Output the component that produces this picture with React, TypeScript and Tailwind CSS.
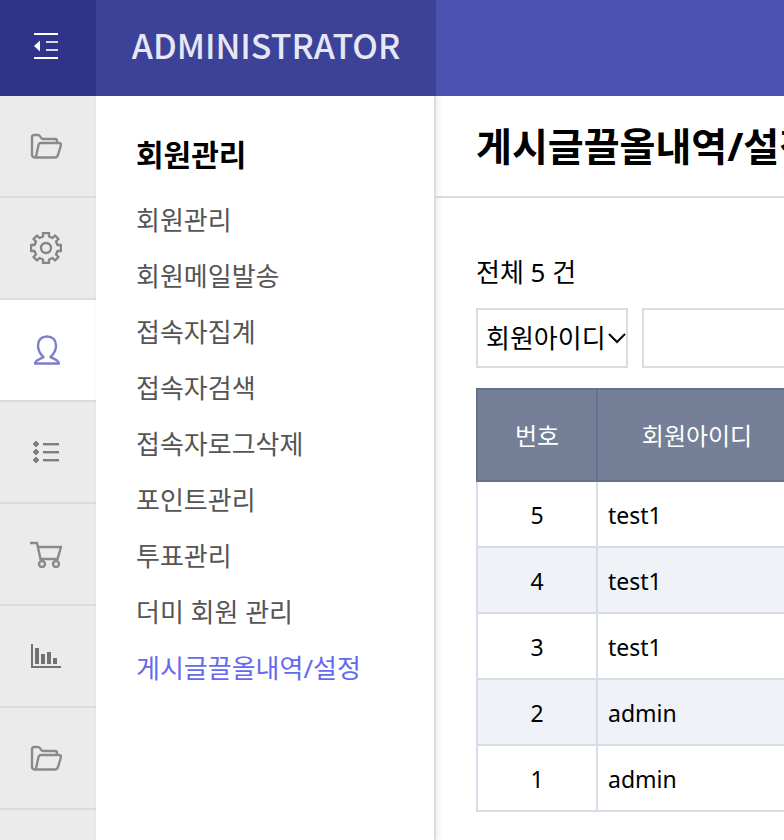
import type { ReactNode } from "react";

const LATIN_KR = "font-['Noto_Sans','Noto_Sans_CJK_KR',sans-serif]";

function FolderIcon() {
  return (
    <svg width="32" height="28" viewBox="0 0 32 28" fill="none" stroke="#8a8a8a" strokeWidth="2.4" strokeLinejoin="round">
      <path d="M4 25 Q2 25 2 23 V5 Q2 3 4 3 H8 Q9.500 3 10.500 5 Q11.500 7 13 7 H25 Q27 7 27 9 V11" />
      <path d="M3.500 25.500 H25 Q27 25.500 28 23 L31 13 Q31 11 29 11 H11 Q9 11 8.500 13 L6 24.500" />
    </svg>
  );
}

function GearIcon() {
  return (
    <svg width="32" height="32" viewBox="0 0 32 32" fill="none" stroke="#858585" strokeWidth="2.4" strokeLinejoin="round">
      <path d="M13 1 H19 V4.500 L22.500 6 L25 3.500 L28.500 7 L26 9.500 L27.500 13 H31 V19 H27.500 L26 22.500 L28.500 25 L25 28.500 L22.500 26 L19 27.500 V31 H13 V27.500 L9.500 26 L7 28.500 L3.500 25 L6 22.500 L4.500 19 H1 V13 H4.500 L6 9.500 L3.500 7 L7 3.500 L9.500 6 L13 4.500 Z" />
      <circle cx="16" cy="16" r="5" />
    </svg>
  );
}

function PersonIcon() {
  return (
    <svg width="28" height="30" viewBox="0 0 28 30" fill="none" stroke="#7c7fce" strokeWidth="2.4" strokeLinejoin="round">
      <path d="M11.500 22 C8 19 6 15 6 10.500 C6 5 9.500 1.500 15 1.500 C20.500 1.500 24 5 24 10.500 C24 15 22 19 18.500 22 C21 24 26 24 27 28.500 H3 C4 24 9 24 11.500 22 Z" />
    </svg>
  );
}

function ListIcon() {
  return (
    <svg width="28" height="24" viewBox="0 0 28 24" fill="#808080">
      {[4, 12, 20].map((y) => (
        <g key={y}>
          <path d={`M4 ${y - 3} L7 ${y} L4 ${y + 3} L1 ${y} Z`} stroke="#808080" strokeLinejoin="round" />
          <rect x="11" y={y - 1} width="16" height="2.400" />
        </g>
      ))}
    </svg>
  );
}

function CartIcon() {
  return (
    <svg width="32" height="28" viewBox="0 0 32 28" fill="none" stroke="#8a8a8a" strokeWidth="2.4">
      <path d="M0 3 H7 L10.500 19 H27.500 L31 7 H8" />
      <circle cx="12" cy="24" r="3" />
      <circle cx="26" cy="24" r="3" />
    </svg>
  );
}

function ChartIcon() {
  return (
    <svg width="30" height="24" viewBox="0 0 30 24" fill="#727272">
      <path d="M0 0 H2 V22 H30 V24 H0 Z" />
      <rect x="4" y="4" width="4" height="16" />
      <rect x="10" y="10" width="4" height="10" />
      <rect x="16" y="8" width="4" height="12" />
      <rect x="22" y="14" width="4" height="6" />
    </svg>
  );
}

const sections: { label: string; icon: ReactNode; active?: boolean }[] = [
  { label: "환경설정", icon: <FolderIcon /> },
  { label: "설정", icon: <GearIcon /> },
  { label: "회원관리", icon: <PersonIcon />, active: true },
  { label: "게시판관리", icon: <ListIcon /> },
  { label: "쇼핑몰관리", icon: <CartIcon /> },
  { label: "통계", icon: <ChartIcon /> },
  { label: "기타", icon: <FolderIcon /> },
];

const menu = [
  "회원관리",
  "회원메일발송",
  "접속자집계",
  "접속자검색",
  "접속자로그삭제",
  "포인트관리",
  "투표관리",
  "더미 회원 관리",
  "게시글끌올내역/설정",
];

const rows = [
  { no: 5, id: "test1" },
  { no: 4, id: "test1" },
  { no: 3, id: "test1" },
  { no: 2, id: "admin" },
  { no: 1, id: "admin" },
];

export default function App() {
  return (
    <div className={`flex h-screen flex-col overflow-hidden bg-white text-black ${LATIN_KR}`}>
      <header className="relative z-20 flex h-24 shrink-0 bg-[#4c52b0]">
        <button type="button" aria-label="메뉴" className="flex w-24 items-center justify-center bg-[#2f3389] pr-1 pb-1">
          <svg width="24" height="26" viewBox="0 0 24 26" fill="#ffffff">
            <rect width="24" height="2" />
            <rect y="24" width="24" height="2" />
            <path d="M0 13 L6 7.500 V18.500 Z" />
            <rect x="12" y="8" width="12" height="2" opacity="0.8" />
            <rect x="12" y="16" width="12" height="2" opacity="0.8" />
          </svg>
        </button>
        <a
          href="#"
          className="flex w-[340px] items-center justify-center bg-[#3d4299] pb-2 font-['Noto_Sans_CJK_KR',sans-serif] text-[34px] font-medium text-[#e6e6f4]"
        >
          ADMINISTRATOR
        </a>
      </header>

      <div className="flex min-h-0 flex-1">
        <nav className="w-24 shrink-0 overflow-hidden bg-[#ebebeb]">
          <ul>
            {sections.map((s, i) => (
              <li key={i}>
                <a
                  href="#"
                  aria-label={s.label}
                  className={`flex h-[102px] items-center justify-center border-b-2 border-[#dcdcdc] pr-1 ${s.active ? "bg-white" : ""}`}
                >
                  {s.icon}
                </a>
              </li>
            ))}
          </ul>
        </nav>

        <aside className="z-10 w-[340px] shrink-0 border-r-2 border-[#dcdcdc] bg-white px-10 pt-10 shadow-[2px_0_6px_rgba(0,0,0,0.08)]">
          <h2 className="text-[30px] leading-[38px] font-bold">회원관리</h2>
          <ul className="mt-[18px]">
            {menu.map((m, i) => (
              <li key={m}>
                <a
                  href="#"
                  className={`block text-[26px] leading-[56px] whitespace-nowrap ${i === menu.length - 1 ? "text-[#6469ef]" : "text-[#555555]"}`}
                >
                  {m}
                </a>
              </li>
            ))}
          </ul>
        </aside>

        <main className="min-w-0 flex-1 overflow-hidden">
          <h1 className="h-[102px] border-b-2 border-[#dcdcdc] pl-10 text-[39px] leading-[100px] font-bold whitespace-nowrap">
            게시글끌올내역/설정
          </h1>
          <div className="w-[900px] px-10 pt-14">
            <p className="text-[26px] leading-9">전체 5 건</p>
            <form className="mt-[18px] flex gap-[14px]">
              <div className="relative">
                <select
                  aria-label="검색대상"
                  className="h-[60px] w-[152px] appearance-none border-2 border-[#dcdcdc] bg-white pl-2 text-[26px]"
                >
                  <option>회원아이디</option>
                </select>
                <svg
                  className="pointer-events-none absolute top-6 right-0 h-3 w-5"
                  viewBox="0 0 20 12"
                  fill="none"
                  stroke="#000000"
                  strokeWidth="2"
                >
                  <path d="M1 2 L9 10 L17 2" />
                </svg>
              </div>
              <input type="text" aria-label="검색어" className="h-[60px] w-80 border-2 border-[#dcdcdc] px-2 text-[26px]" />
            </form>
            <table className="mt-5 w-full table-fixed border-collapse">
              <colgroup>
                <col className="w-[120px]" />
                <col className="w-[200px]" />
                <col />
              </colgroup>
              <thead>
                <tr className="h-[92px] bg-[#757f98] text-[24px] text-white">
                  <th className="border-2 border-[#67718b] pt-[2px] font-normal">번호</th>
                  <th className="border-2 border-[#67718b] pt-[2px] font-normal">회원아이디</th>
                  <th className="border-2 border-[#67718b]" />
                </tr>
              </thead>
              <tbody>
                {rows.map((r) => (
                  <tr key={r.no} className="h-[66px] text-[23px] even:bg-[#eff3f8]">
                    <td className="border-2 border-[#d8dce8] pt-[2px] text-center">{r.no}</td>
                    <td className="border-2 border-[#d8dce8] px-[10px] pt-[2px]">{r.id}</td>
                    <td className="border-2 border-[#d8dce8]" />
                  </tr>
                ))}
              </tbody>
            </table>
          </div>
        </main>
      </div>
    </div>
  );
}
